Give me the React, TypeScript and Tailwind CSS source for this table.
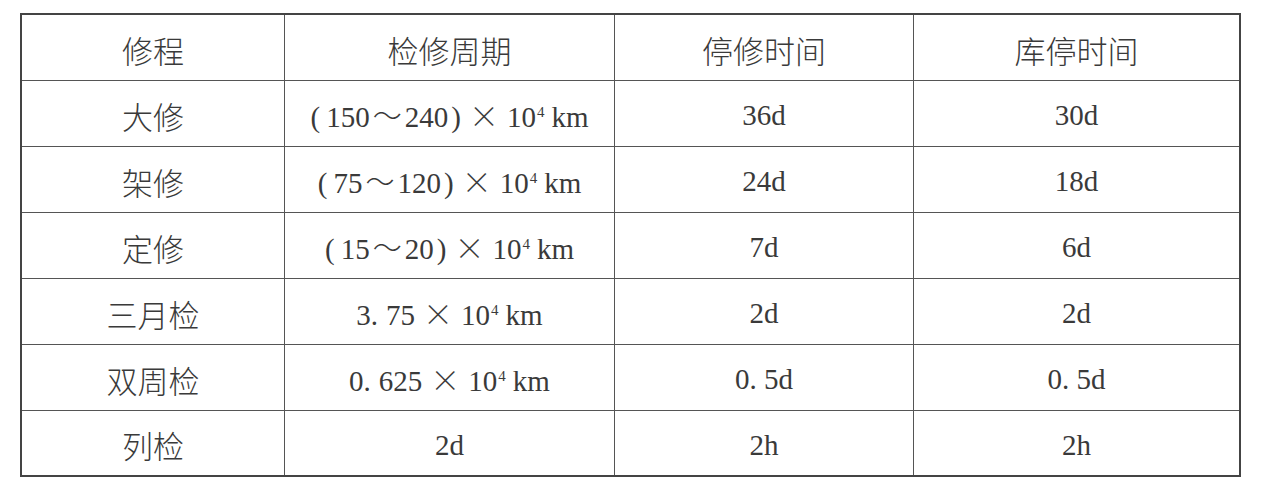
import React from "react";

const cjk = "font-[family-name:'Noto_Sans_CJK_SC',sans-serif] font-light";

function Times() {
  return <span className={`${cjk} mx-[8px] text-[30px]`}>×</span>;
}

function Tilde() {
  return <span className={`${cjk} mx-[3px] text-[29px]`}>～</span>;
}

function Km() {
  return (
    <>
      <Times />
      10
      <sup className="text-[15px] -top-[10px] ml-[1px]">4</sup>
      <span className="ml-[7px]">km</span>
    </>
  );
}

function Range({ from, to }: { from: string; to: string }) {
  return (
    <span>
      <span className="mr-[6px]">(</span>
      {from}
      <Tilde />
      {to}
      <span className="ml-[3px]">)</span>
      <Km />
    </span>
  );
}

type Row = { name: string; period: React.ReactNode; stop: string; depot: string };

const rows: Row[] = [
  { name: "大修", period: <Range from="150" to="240" />, stop: "36d", depot: "30d" },
  { name: "架修", period: <Range from="75" to="120" />, stop: "24d", depot: "18d" },
  { name: "定修", period: <Range from="15" to="20" />, stop: "7d", depot: "6d" },
  {
    name: "三月检",
    period: (
      <span>
        3.<span className="ml-[8px]">75</span>
        <Km />
      </span>
    ),
    stop: "2d",
    depot: "2d",
  },
  {
    name: "双周检",
    period: (
      <span>
        0.<span className="ml-[8px]">625</span>
        <Km />
      </span>
    ),
    stop: "0. 5d",
    depot: "0. 5d",
  },
  { name: "列检", period: "2d", stop: "2h", depot: "2h" },
];

const heads = ["修程", "检修周期", "停修时间", "库停时间"];

function Cell({ children, last, kind }: { children: React.ReactNode; last?: boolean; kind: "cjk" | "num" }) {
  return (
    <div
      className={`flex items-center justify-center ${last ? "" : "border-r border-[#555]"} ${
        kind === "cjk"
          ? "font-[family-name:'Noto_Sans_CJK_SC',sans-serif] font-light text-[31px] pt-[5px]"
          : "font-[family-name:'Liberation_Serif',serif] text-[29px] pt-[5px]"
      }`}
    >
      {children}
    </div>
  );
}

export default function App() {
  return (
    <div className="min-h-[498px] w-[1264px] bg-white pl-[20px] pt-[13px] text-[#3a3a3a]">
      <div className="w-[1221px] border-2 border-[#444]">
        <div className="grid h-[66px] grid-cols-[263px_330px_299px_325px] border-b border-[#555]">
          {heads.map((h, i) => (
            <Cell key={h} kind="cjk" last={i === 3}>
              {h}
            </Cell>
          ))}
        </div>
        {rows.map((r, i) => (
          <div
            key={r.name}
            className={`grid grid-cols-[263px_330px_299px_325px] ${
              i === rows.length - 1 ? "h-[64px]" : "h-[66px] border-b border-[#555]"
            }`}
          >
            <Cell kind="cjk">{r.name}</Cell>
            <Cell kind="num">{r.period}</Cell>
            <Cell kind="num">{r.stop}</Cell>
            <Cell kind="num" last>
              {r.depot}
            </Cell>
          </div>
        ))}
      </div>
    </div>
  );
}
